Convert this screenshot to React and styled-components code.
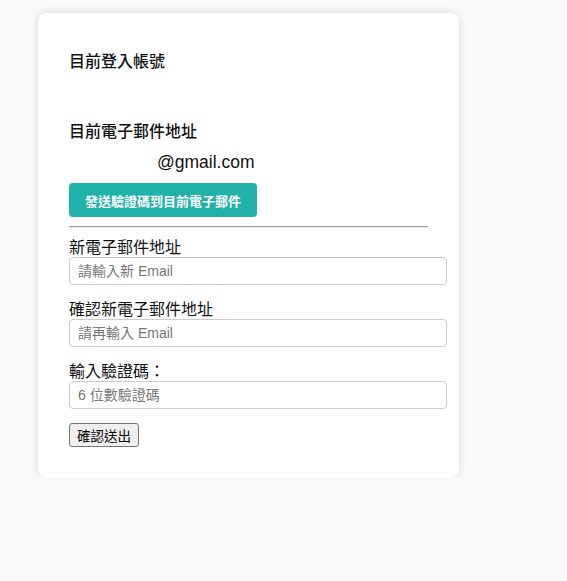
import React from 'react';
import styled, { createGlobalStyle } from 'styled-components';

const GlobalStyle = createGlobalStyle`
  body {
    margin: 0;
    background: #f9f9f9;
    font-family: "Liberation Sans", "Noto Sans CJK TC", sans-serif;
    color: #111;
  }
`;

const Page = styled.div`
  padding: 13px 0 0 38px;
`;

const Card = styled.div`
  width: 359px;
  padding: 30px 31px;
  background: #fff;
  border-radius: 8px;
  box-shadow: 0 0 8px rgba(0, 0, 0, 0.14);
  display: flex;
  flex-direction: column;
`;

const Heading = styled.div`
  font-family: "Noto Sans CJK TC", sans-serif;
  font-size: 16px;
  font-weight: 500;
  line-height: 24px;
  margin-top: ${(p) => p.$top}px;
`;

const Value = styled.div`
  font-size: 17.5px;
  line-height: 24px;
  min-height: 24px;
  margin-top: 8px;
  display: flex;
`;

const Redacted = styled.span`
  width: 88px;
`;

const SendButton = styled.button`
  align-self: flex-start;
  margin-top: 9px;
  height: 34px;
  padding: 0 16px;
  border: none;
  border-radius: 4px;
  background: #20b2aa;
  color: #fff;
  font-family: "Noto Sans CJK TC", sans-serif;
  font-size: 13px;
  font-weight: 700;
`;

const Divider = styled.hr`
  width: 100%;
  margin: 9px 0 0;
  border: none;
  border-top: 1px solid #999;
  border-bottom: 1px solid #eee;
`;

const Field = styled.div`
  display: flex;
  flex-direction: column;
  margin-top: ${(p) => p.$top}px;
`;

const Label = styled.label`
  font-family: "Noto Sans CJK TC", sans-serif;
  font-size: 16px;
  line-height: 18px;
  height: 20px;
`;

const Input = styled.input`
  width: 100%;
  box-sizing: content-box;
  height: 26px;
  padding: 0 9px 0 8px;
  border: 1px solid #ccc;
  border-radius: 4px;
  font-family: "Liberation Sans", "Noto Sans CJK TC", sans-serif;
  font-size: 14px;
  &::placeholder {
    color: #777;
  }
`;

const SubmitButton = styled.button`
  align-self: flex-start;
  margin-top: 14px;
  height: 24px;
  padding: 0 7px;
  border: 1px solid #767676;
  border-radius: 3px;
  background: #efefef;
  color: #000;
  font-family: "Noto Sans CJK TC", sans-serif;
  font-size: 13.5px;
`;

const App = () => (
  <Page>
    <GlobalStyle />
    <Card>
      <Heading $top={5}>目前登入帳號</Heading>
      <Value />
      <Heading $top={14}>目前電子郵件地址</Heading>
      <Value>
        <Redacted />
        @gmail.com
      </Value>
      <SendButton>發送驗證碼到目前電子郵件</SendButton>
      <Divider />
      <Field $top={9}>
        <Label>新電子郵件地址</Label>
        <Input placeholder="請輸入新 Email" />
      </Field>
      <Field $top={14}>
        <Label>確認新電子郵件地址</Label>
        <Input placeholder="請再輸入 Email" />
      </Field>
      <Field $top={14}>
        <Label>輸入驗證碼：</Label>
        <Input placeholder="6 位數驗證碼" />
      </Field>
      <SubmitButton>確認送出</SubmitButton>
    </Card>
  </Page>
);

export default App;
